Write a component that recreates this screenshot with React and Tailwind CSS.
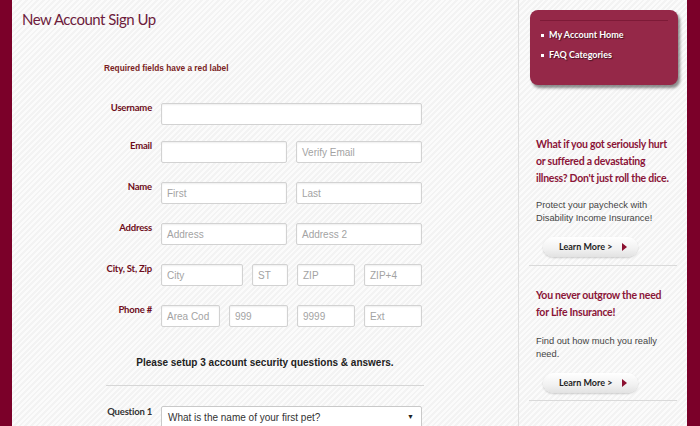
import React from "react";

const lato = "font-['Lato',_'Open_Sans',_sans-serif]";
const arial = "font-['Liberation_Sans',_Arial,_sans-serif]";

function Field({ placeholder, className = "" }) {
  return (
    <div
      className={`h-[22px] border border-[#d2d2d2] rounded-[2px] bg-white shadow-[inset_0_1px_2px_rgba(0,0,0,0.07)] px-[5px] flex items-center text-[10px] text-[#a3a3a3] ${arial} ${className}`}
    >
      {placeholder}
    </div>
  );
}

function Row({ label, children, className = "", labelClass = "text-[#6e0d20]" }) {
  return (
    <div className={`flex items-start ${className}`}>
      <div className={`w-[57px] pr-[9px] text-right text-[9.5px] leading-[9px] font-bold tracking-[-0.2px] whitespace-nowrap ${lato} ${labelClass}`}>
        {label}
      </div>
      <div className="w-[261px] flex gap-[9px]">{children}</div>
    </div>
  );
}

function LearnMore({ className = "" }) {
  return (
    <div
      className={`ml-[24px] w-[95px] h-[20px] rounded-full bg-[linear-gradient(#ffffff,#f1f1f1_60%,#e2e2e2)] shadow-[0_1px_2px_rgba(0,0,0,0.18)] flex items-center ${className}`}
    >
      <span className={`ml-[16px] text-[9px] font-bold text-[#1e1e1e] ${lato}`}>Learn More &gt;</span>
      <span className="ml-[10px] w-0 h-0 border-y-[4.5px] border-y-transparent border-l-[5px] border-l-[#8b1030]" />
    </div>
  );
}

export default function App() {
  return (
    <div className="flex h-[426px] w-[700px] overflow-hidden bg-[repeating-linear-gradient(135deg,#fbfbfb_0px,#fbfbfb_2px,#f3f3f3_2px,#f3f3f3_4px)]">
      <div className="w-[12px] shrink-0 bg-[#7b0029]" />

      <main className="w-[506px] shrink-0">
        <h1 className={`pl-[10px] pt-[9px] text-[15px] leading-[20px] tracking-[-0.5px] text-[#6d1c3c] ${lato}`}>
          New Account Sign Up
        </h1>

        <div className="ml-[92px] w-[322px]">
          <p className={`mt-[33px] text-[8.3px] leading-[12px] font-bold text-[#7a1e24] ${arial}`}>
            Required fields have a red label
          </p>

          <Row label="Username" className="mt-[29px]">
            <Field className="flex-1" />
          </Row>
          <Row label="Email" className="mt-[16px]">
            <Field className="flex-1" />
            <Field className="flex-1" placeholder="Verify Email" />
          </Row>
          <Row label="Name" className="mt-[19px]">
            <Field className="flex-1" placeholder="First" />
            <Field className="flex-1" placeholder="Last" />
          </Row>
          <Row label="Address" className="mt-[19px]">
            <Field className="flex-1" placeholder="Address" />
            <Field className="flex-1" placeholder="Address 2" />
          </Row>
          <Row label="City, St, Zip" className="mt-[19px]">
            <Field className="w-[82px]" placeholder="City" />
            <Field className="w-[36px]" placeholder="ST" />
            <Field className="w-[58px]" placeholder="ZIP" />
            <Field className="w-[58px]" placeholder="ZIP+4" />
          </Row>
          <Row label="Phone #" className="mt-[19px]">
            <Field className="w-[59px] overflow-hidden whitespace-nowrap" placeholder="Area Cod" />
            <Field className="w-[59px]" placeholder="999" />
            <Field className="w-[58px]" placeholder="9999" />
            <Field className="w-[58px]" placeholder="Ext" />
          </Row>

          <p className={`mt-[29px] text-center text-[10px] leading-[14px] font-bold text-[#222] ${arial}`}>
            Please setup 3 account security questions &amp; answers.
          </p>
          <div className="mt-[15px] mx-[2px] border-t border-[#d6d6d6]" />

          <Row label="Question 1" className="mt-[20px]" labelClass="text-[#333] pt-[1px]">
            <div
              className={`flex-1 h-[22px] border border-[#c9c9c9] rounded-[2px] bg-white flex items-center justify-between pl-[6px] pr-[7px] text-[10px] text-[#333] ${arial}`}
            >
              <span>What is the name of your first pet?</span>
              <span className="text-[7px] text-[#222]">▼</span>
            </div>
          </Row>
        </div>
      </main>

      <aside className="w-[169px] shrink-0 border-l border-[#dedede]">
        <div className="mt-[10px] ml-[11px] w-[148px] h-[75px] rounded-[8px] bg-[#952848] shadow-[2px_3px_3px_rgba(0,0,0,0.45)] pt-[10px] px-[10px]">
          <div className="border-t border-[#7d1a37]" />
          <ul className={`mt-[4px] text-[9px] font-bold text-white ${lato} [text-shadow:1px_1px_1px_rgba(0,0,0,0.55)]`}>
            <li className="flex items-center h-[20px]">
              <span className="ml-[1px] w-[3px] h-[3px] bg-white mr-[5px]" />
              My Account Home
            </li>
            <li className="flex items-center h-[20px]">
              <span className="ml-[1px] w-[3px] h-[3px] bg-white mr-[5px]" />
              FAQ Categories
            </li>
          </ul>
        </div>

        <h3 className={`mt-[51px] ml-[17px] w-[140px] text-[10.5px] leading-[17px] tracking-[-0.25px] font-bold text-[#8b1538] ${lato}`}>
          What if you got seriously hurt or suffered a devastating illness? Don't just roll the dice.
        </h3>
        <p className={`mt-[12px] ml-[17px] w-[140px] text-[9.3px] leading-[13px] text-[#454545] ${arial}`}>
          Protect your paycheck with Disability Income Insurance!
        </p>
        <LearnMore className="mt-[12px]" />
        <div className="mt-[8px] ml-[10px] w-[148px] border-t border-[#dadada]" />

        <h3 className={`mt-[21px] ml-[17px] w-[140px] text-[10.5px] leading-[17px] tracking-[-0.25px] font-bold text-[#8b1538] ${lato}`}>
          You never outgrow the need for Life Insurance!
        </h3>
        <p className={`mt-[14px] ml-[17px] w-[135px] text-[9.3px] leading-[13px] text-[#454545] ${arial}`}>
          Find out how much you really need.
        </p>
        <LearnMore className="mt-[12px]" />
        <div className="mt-[7px] ml-[10px] w-[148px] border-t border-[#dadada]" />
      </aside>

      <div className="w-[13px] shrink-0 bg-[#7b0029]" />
    </div>
  );
}
